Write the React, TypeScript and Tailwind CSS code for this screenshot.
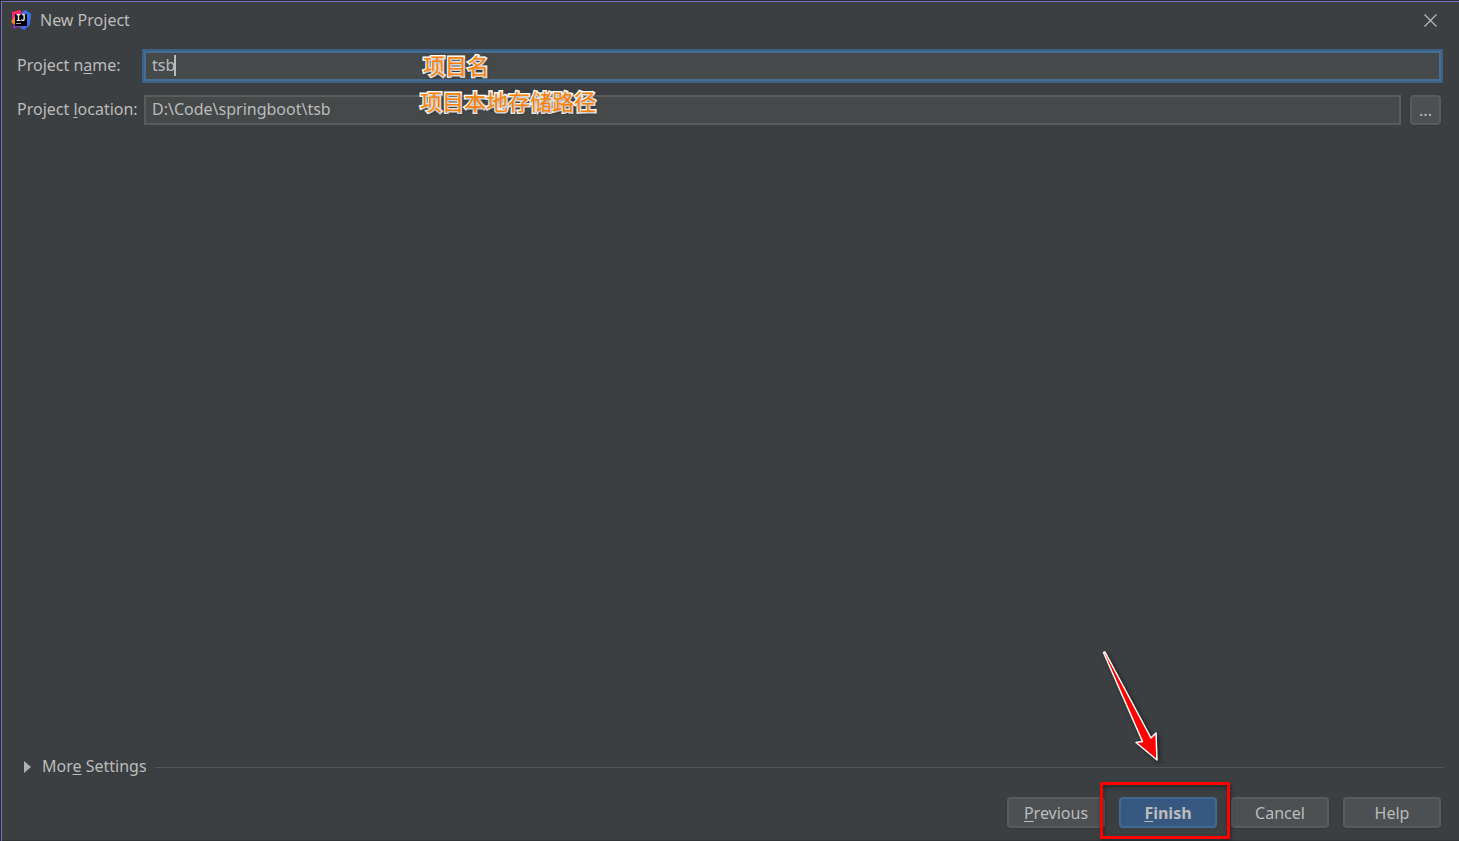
import { useState } from "react";
import type { ReactNode } from "react";

const fieldBase =
  "h-[30px] min-w-0 flex-1 border-2 bg-[#45494a] pb-[2px] pl-[6px] text-[16px] text-[#bbbbbb] outline-none";

// Underlined mnemonic letter
function Key({ children }: { children: ReactNode }) {
  return <u className="underline decoration-1 underline-offset-2">{children}</u>;
}

function IdeaLogo() {
  return (
    <svg viewBox="0 0 20 20" className="h-5 w-5" aria-hidden="true">
      <defs>
        <linearGradient id="blue" x1="0" y1="0" x2="1" y2="1">
          <stop offset="0" stopColor="#6b57ff" />
          <stop offset="0.5" stopColor="#2f7bea" />
          <stop offset="1" stopColor="#4a5be8" />
        </linearGradient>
        <linearGradient id="pink" x1="0" y1="0" x2="0" y2="1">
          <stop offset="0" stopColor="#fe2857" />
          <stop offset="0.6" stopColor="#f0307c" />
          <stop offset="1" stopColor="#d03f90" />
        </linearGradient>
      </defs>
      <path d="M10 3 L14 0 L20 4 L19 15 L13 20 L8 17 Z" fill="url(#blue)" />
      <path d="M1 2 L9 0 L12 5 L8 12 L1 9 Z" fill="url(#pink)" />
      <path d="M0 11 L4 7 L5 15 L2 14 Z" fill="#fc801d" />
      <path d="M3 14 L9 13 L12 18 L7 17 L2 19 Z" fill="#9038b8" />
      <rect x="4" y="4" width="12" height="12" fill="#000000" />
      <text
        x="5"
        y="11"
        fill="#ffffff"
        fontSize="8"
        fontWeight="700"
        fontFamily="DejaVu Sans Mono, monospace"
      >
        IJ
      </text>
      <rect x="5" y="13" width="5" height="1" fill="#a0a0a0" />
    </svg>
  );
}

function Note({ className, children }: { className: string; children: ReactNode }) {
  return (
    <span
      className={`pointer-events-none absolute text-[22px] leading-[26px] whitespace-nowrap text-[#ff8000] [-webkit-text-stroke:3px_white] [paint-order:stroke_fill] [text-shadow:1px_2px_3px_rgba(0,0,0,0.4)] font-['Noto_Sans_CJK_SC',sans-serif] ${className}`}
    >
      {children}
    </span>
  );
}

function DialogButton({ primary, children }: { primary?: boolean; children: ReactNode }) {
  return (
    <button
      type="button"
      className={
        primary
          ? "h-[31px] w-[98px] rounded-[4px] border-2 border-[#43698e] bg-[#365880] text-[16px] font-bold text-[#bbbbbb]"
          : "h-[31px] w-[98px] rounded-[4px] border-2 border-[#585b5c] bg-[#4c5052] text-[16px] text-[#bbbbbb] shadow-[0_1px_1px_#36393a]"
      }
    >
      {children}
    </button>
  );
}

export default function App() {
  const [name, setName] = useState("tsb");
  const [location, setLocation] = useState("D:\\Code\\springboot\\tsb");

  return (
    <div className="flex min-h-screen bg-[#2b2b2b] pt-px pl-px font-['Noto_Sans','Noto_Sans_CJK_SC',sans-serif] text-[16px] text-[#bbbbbb]">
      <div className="flex flex-1 flex-col border-t border-l border-[#7b6fc0] bg-[#3c3f41]">
        <header className="flex h-[36px] items-center pr-[22px] pl-[9px]">
          <IdeaLogo />
          <h1 className="ml-[9px] flex-1">New Project</h1>
          <button type="button" aria-label="Close">
            <svg viewBox="0 0 13 13" className="h-[13px] w-[13px]" fill="none" stroke="#bbbbbb" strokeWidth="1.2">
              <path d="M0.5 0.5 L12.5 12.5 M12.5 0.5 L0.5 12.5" />
            </svg>
          </button>
        </header>

        <form className="mt-[13px] flex flex-col gap-[14px] pr-[18px] pl-[15px]">
          <div className="flex items-center">
            <label htmlFor="name" className="w-[127px] pb-[2px]">
              Project n<Key>a</Key>me:
            </label>
            <div className="relative flex flex-1">
              <input
                id="name"
                value={name}
                onChange={(e) => setName(e.target.value)}
                className={`${fieldBase} border-[#466d94] ring-2 ring-[#3d6185]`}
              />
              <span className="absolute top-1 left-[30px] h-[21px] w-[2px] bg-[#bbbbbb]" />
              <Note className="top-0 left-[279px]">项目名</Note>
            </div>
          </div>
          <div className="flex items-center">
            <label htmlFor="location" className="w-[127px] pb-[2px]">
              Project <Key>l</Key>ocation:
            </label>
            <div className="relative flex flex-1">
              <input
                id="location"
                value={location}
                onChange={(e) => setLocation(e.target.value)}
                className={`${fieldBase} border-[#5a5c5c]`}
              />
              <Note className="-top-2 left-[276px]">项目本地存储路径</Note>
            </div>
            <button
              type="button"
              aria-label="Browse"
              className="ml-[9px] h-[30px] w-[31px] rounded-[4px] border-2 border-[#585b5c] bg-[#4c5052] text-[16px] leading-[26px] shadow-[0_1px_1px_#36393a]"
            >
              ...
            </button>
          </div>
        </form>

        <div className="mt-auto flex items-center pr-[15px] pl-[22px]">
          <button type="button" className="flex items-center">
            <svg viewBox="0 0 7 12" className="mr-[11px] h-3 w-[7px]" fill="#afb1b3">
              <path d="M0 0 L7 6 L0 12 Z" />
            </svg>
            <span className="pb-[2px]">
              Mor<Key>e</Key> Settings
            </span>
          </button>
          <hr className="ml-2 flex-1 border-[#515658]" />
        </div>

        <footer className="mt-[17px] flex justify-end gap-[14px] border-b border-[#323537] pr-[18px] pb-3">
          <DialogButton>
            <Key>P</Key>revious
          </DialogButton>
          <div className="relative">
            <DialogButton primary>
              <Key>F</Key>inish
            </DialogButton>
            <div className="pointer-events-none absolute -top-[15px] -right-[13px] -bottom-[11px] -left-[19px] border-[3px] border-[#ff0000] shadow-[1px_2px_4px_rgba(0,0,0,0.4),inset_1px_2px_4px_rgba(0,0,0,0.4)]" />
            <svg
              viewBox="0 0 64 120"
              className="pointer-events-none absolute -top-[150px] -left-[19px] h-[120px] w-[64px] drop-shadow-[2px_2px_2px_rgba(0,0,0,0.5)]"
            >
              <path
                d="M3.5 5.5 L5 5 L51 91 L56 86 L57 113 L36 95.5 L42.5 94.5 Z"
                fill="#ff0000"
                stroke="#ffffff"
                strokeWidth="1.5"
                strokeLinejoin="round"
              />
            </svg>
          </div>
          <DialogButton>Cancel</DialogButton>
          <DialogButton>Help</DialogButton>
        </footer>
      </div>
    </div>
  );
}
